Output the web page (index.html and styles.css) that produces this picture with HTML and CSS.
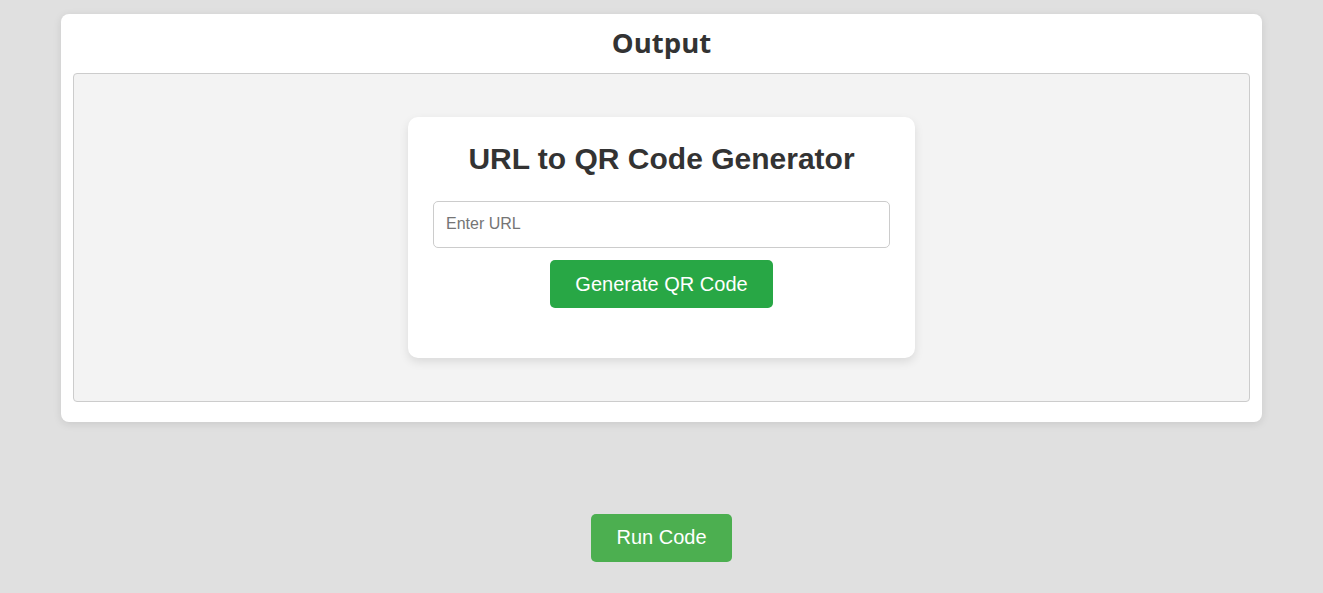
FILE: index.html
```html
<!DOCTYPE html>
<html lang="en">
<head>
<meta charset="utf-8">
<title>Output</title>
<link rel="stylesheet" href="styles.css">
</head>
<body>
<div class="page">
  <section class="output-card">
    <h2 class="output-title">Output</h2>
    <div class="frame">
      <div class="qr-card">
        <h1 class="qr-title">URL to QR Code Generator</h1>
        <input class="url-input" type="text" placeholder="Enter URL">
        <button class="gen-btn" type="button">Generate QR Code</button>
      </div>
    </div>
  </section>
  <div class="run-row">
    <button class="run-btn" type="button">Run Code</button>
  </div>
</div>
</body>
</html>
```
FILE: styles.css
```css
html, body {
  margin: 0;
  padding: 0;
  background: #e0e0e0;
}
body {
  font-family: "Liberation Sans", Arial, sans-serif;
  color: #333;
}
.page {
  padding-top: 14px;
  display: flex;
  flex-direction: column;
  align-items: center;
}
.output-card {
  box-sizing: border-box;
  width: 1201px;
  background: #fff;
  border-radius: 8px;
  box-shadow: 0 2px 8px rgba(0,0,0,0.1);
  padding: 12px 12px 20px;
}
.output-title {
  margin: 0 0 12px;
  text-align: center;
  font-family: "Open Sans", "Noto Sans", sans-serif;
  font-weight: 700;
  font-size: 27.5px;
  line-height: 34px;
  padding-bottom: 1px;
  color: #333;
}
.frame {
  box-sizing: border-box;
  height: 329px;
  background: #f3f3f3;
  border: 1px solid #ccc;
  border-radius: 4px;
  display: flex;
  justify-content: center;
  align-items: flex-start;
  padding-top: 43px;
}
.qr-card {
  box-sizing: border-box;
  width: 507px;
  height: 241px;
  background: #fff;
  border-radius: 10px;
  box-shadow: 0 4px 10px rgba(0,0,0,0.1);
  padding: 25px 25px 0;
  display: flex;
  flex-direction: column;
  align-items: center;
}
.qr-title {
  margin: 0 0 25px;
  font-size: 30px;
  line-height: 34px;
  font-weight: 700;
  color: #333;
}
.url-input {
  box-sizing: border-box;
  width: 100%;
  height: 47px;
  border: 1px solid #ccc;
  border-radius: 5px;
  padding: 0 12px 2px;
  font-family: "Liberation Sans", Arial, sans-serif;
  font-size: 16px;
  color: #333;
  background: #fff;
  outline: none;
}
.url-input::placeholder {
  color: #757575;
}
.gen-btn {
  margin-top: 12px;
  width: 223px;
  height: 48px;
  padding: 0;
  border: none;
  border-radius: 5px;
  background: #28a745;
  color: #fff;
  font-family: "Liberation Sans", Arial, sans-serif;
  font-size: 20px;
  cursor: pointer;
}
.run-row {
  margin-top: 92px;
  display: flex;
  justify-content: center;
}
.run-btn {
  width: 141px;
  height: 48px;
  padding: 0 0 2px;
  border: none;
  border-radius: 5px;
  background: #4caf50;
  color: #fff;
  font-family: "Liberation Sans", Arial, sans-serif;
  font-size: 20px;
  cursor: pointer;
}
```
